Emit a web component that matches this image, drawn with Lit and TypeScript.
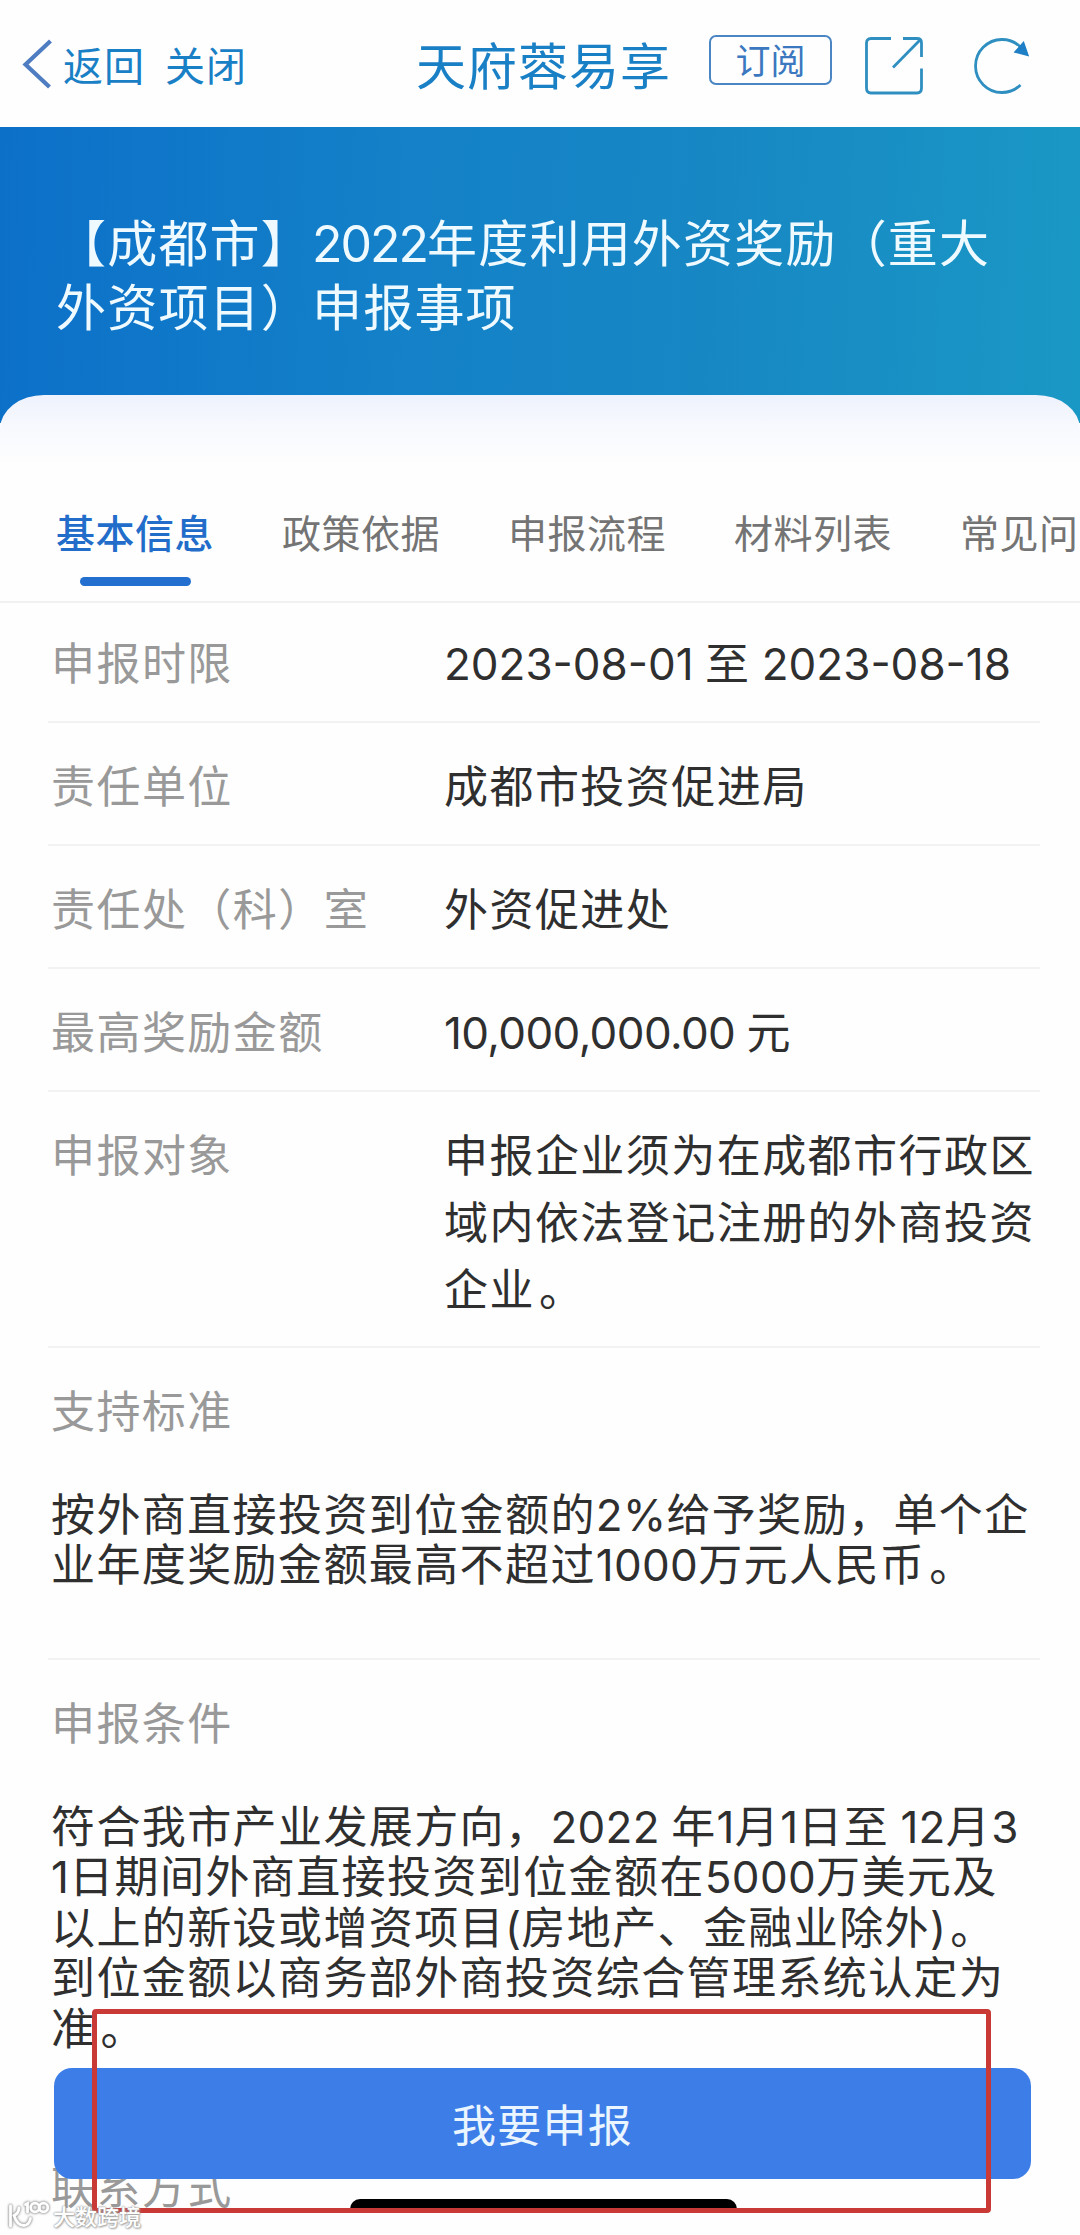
import { LitElement, html, css } from "lit";
import { customElement, property } from "lit/decorators.js";

/** Splits mixed text so that Latin digits and signs use the numeral face. */
const mixed = (text: string) =>
  text
    .split(/([0-9.,%()\-]+|。)/)
    .filter((part) => part !== "")
    .map((part) =>
      part === "。"
        ? html`<span class="stop">。</span>`
        : /^[0-9.,%()\-]+$/.test(part)
          ? html`<span class="num">${part}</span>`
          : part
    );

const numeral = css`
  .num {
    font-family: Inter, "Liberation Sans", sans-serif;
    line-height: 0;
    letter-spacing: var(--num-spacing, -0.1px);
  }
  .stop {
    margin-left: 4px;
    margin-right: -4px;
  }
`;

@customElement("nav-header")
class NavHeader extends LitElement {
  static styles = css`
    :host {
      display: flex;
      align-items: center;
      box-sizing: border-box;
      height: 127px;
      padding: 0 29px 0 22px;
      color: #1a80c6;
      background: #fefefe;
    }
    .chevron {
      width: 31px;
      height: 50px;
      margin-right: 10px;
    }
    .link {
      font-size: 40px;
      letter-spacing: 1px;
      line-height: 60px;
      width: 102px;
    }
    .title {
      margin-left: 149px;
      width: 258px;
      font-size: 50px;
      letter-spacing: 1px;
      line-height: 60px;
      margin-top: -2px;
    }
    .subscribe {
      box-sizing: border-box;
      width: 123px;
      height: 50px;
      margin: 0 32px 8px 35px;
      border: 2px solid #4a86c4;
      border-radius: 7px;
      font-size: 35px;
      line-height: 43px;
      text-align: center;
      color: #3b78bf;
    }
    .share {
      width: 60px;
      height: 60px;
      margin: 4px 50px 0 0;
      flex: none;
    }
    .reload {
      width: 58px;
      height: 60px;
      margin-top: 4px;
      flex: none;
    }
    .chevron,
    .subscribe,
    .link,
    .title {
      flex: none;
      white-space: nowrap;
    }
    svg {
      display: block;
      fill: none;
      stroke: #2f8fc0;
      stroke-width: 2.8;
    }
  `;

  render() {
    return html`
      <svg class="chevron" viewBox="0 0 31 50">
        <path d="M28.500 2 L3.500 25.500 L27.500 48" stroke="#4f7dc2" stroke-width="4.200" />
      </svg>
      <span class="link">返回</span>
      <span class="link">关闭</span>
      <span class="title">天府蓉易享</span>
      <span class="subscribe">订阅</span>
      <svg class="share" viewBox="0 0 60 60">
        <path d="M27 2.500 H7 Q2.500 2.500 2.500 7 V52 Q2.500 57 7 57 H53 Q57.500 57 57.500 52 V32.500" />
        <path d="M39 2.500 H53 Q57.500 2.500 57.500 7 V21" />
        <path d="M29 31.500 L56 4" />
      </svg>
      <svg class="reload" viewBox="0 0 58 60">
        <path d="M46.500 49 A26.500 26.500 0 1 1 46.500 11" />
        <path d="M41 16 L49.500 6.500 L54 19.500 Z" fill="#1f7fc6" stroke="#1f7fc6" stroke-width="1.500" />
      </svg>
    `;
  }
}

@customElement("tab-strip")
class TabStrip extends LitElement {
  @property({ attribute: false }) tabs: string[] = [];

  static styles = css`
    :host {
      display: block;
      overflow: hidden;
      border-bottom: 2px solid #f1f1f2;
    }
    .strip {
      display: flex;
      gap: 68px;
      padding: 106px 0 0 56px;
    }
    .tab {
      flex: none;
      width: 158px;
      height: 100px;
      font-size: 39px;
      letter-spacing: 0.5px;
      line-height: 60px;
      white-space: nowrap;
      color: #747474;
    }
    .tab:last-child {
      width: 124px;
    }
    .active {
      color: #226dca;
      font-weight: 500;
    }
    .active::after {
      content: "";
      display: block;
      width: 111px;
      height: 9px;
      margin: 16px 0 0 24px;
      border-radius: 5px;
      background: #226fd0;
    }
  `;

  render() {
    return html`<div class="strip">
      ${this.tabs.map((t, i) => html`<div class="tab ${i === 0 ? "active" : ""}">${t}</div>`)}
    </div>`;
  }
}

@customElement("info-row")
class InfoRow extends LitElement {
  @property() label = "";
  @property({ attribute: false }) lines: string[] = [];

  static styles = [
    numeral,
    css`
      :host {
        display: grid;
        grid-template-columns: 393px 1fr;
        box-sizing: border-box;
        margin: 0 40px 0 48px;
        padding: 28px 0 0 3px;
        border-bottom: 2px solid #f2f2f3;
        font-size: 44px;
        letter-spacing: 1.45px;
        line-height: 67px;
        white-space: nowrap;
      }
      .label {
        color: #999;
      }
      .value {
        color: #2f2f2f;
      }
    `,
  ];

  render() {
    return html`
      <div class="label">${this.label}</div>
      <div class="value">${this.lines.map((l) => html`<div>${mixed(l)}</div>`)}</div>
    `;
  }
}

@customElement("info-section")
class InfoSection extends LitElement {
  @property() label = "";
  @property({ attribute: false }) lines: string[] = [];

  static styles = [
    numeral,
    css`
      :host {
        display: block;
        box-sizing: border-box;
        margin: 0 40px 0 48px;
        padding: 28px 0 0 3px;
        border-bottom: 2px solid #f2f2f3;
        font-size: 44px;
        letter-spacing: 1.4px;
        white-space: nowrap;
        --num-spacing: 0.3px;
      }
      .label {
        line-height: 67px;
        color: #999;
      }
      .body {
        margin-top: 44px;
        line-height: 50.4px;
        color: #2f2f2f;
      }
    `,
  ];

  render() {
    return html`
      <div class="label">${this.label}</div>
      <div class="body">${this.lines.map((l) => html`<div>${mixed(l)}</div>`)}</div>
    `;
  }
}

@customElement("app-root")
class AppRoot extends LitElement {
  static styles = [
    numeral,
    css`
      :host {
        display: block;
        position: relative;
        width: 1080px;
        height: 2235px;
        overflow: hidden;
        background: #fefefe;
        font-family: "Noto Sans CJK SC", sans-serif;
      }
      .banner {
        box-sizing: border-box;
        height: 296px;
        padding: 81px 0 0 56px;
        background: linear-gradient(92deg, #0c70c9 0%, #1481c8 38%, #1787c4 65%, #1a98c5 100%);
        color: #eefaff;
        font-size: 50px;
        letter-spacing: 1.2px;
        line-height: 64px;
        white-space: nowrap;
        --num-spacing: -2px;
      }
      .card {
        margin: -28px 0 0;
        border-radius: 44px 44px 0 0 / 34px 34px 0 0;
        background: linear-gradient(#eef2fd 0, #f7f9fe 32px, #fefefe 70px);
      }
      .first {
        padding-top: 25px;
        height: 120px;
        --num-spacing: 0px;
      }
      .row {
        height: 123px;
      }
      .amount {
        --num-spacing: -0.6px;
      }
      .tall {
        height: 256px;
      }
      .standard {
        height: 312px;
      }
      .conditions {
        height: 464px;
        border-bottom-color: transparent;
      }
      .apply {
        position: absolute;
        left: 54px;
        top: 2068px;
        width: 977px;
        height: 111px;
        border: 0;
        border-radius: 18px;
        background: #3c7de7;
        color: #eaf5ff;
        font-family: inherit;
        font-size: 44px;
        letter-spacing: 1.3px;
        line-height: 109px;
        padding: 0;
      }
      .home {
        position: absolute;
        left: 350px;
        top: 2199px;
        width: 387px;
        height: 12px;
        border-radius: 10px 10px 0 0;
        background: #000;
      }
      .frame {
        position: absolute;
        box-sizing: border-box;
        left: 92px;
        top: 2009px;
        width: 899px;
        height: 204px;
        border: 5px solid #c93a36;
        border-radius: 4px;
      }
      .mark {
        position: absolute;
        left: 8px;
        top: 2198px;
        display: flex;
        align-items: center;
        gap: 4px;
        height: 34px;
        color: #fff;
        font-size: 22px;
        font-weight: 500;
        line-height: 34px;
        white-space: nowrap;
        text-shadow: 0 0 2px #999, 0 0 2px #aaa, 1px 1px 2px #aaa;
      }
      .logo {
        width: 41px;
        height: 30px;
        fill: none;
        stroke: #fff;
        stroke-width: 2.8;
        stroke-linecap: round;
        filter: drop-shadow(0 0 1px #999) drop-shadow(0 0 1px #aaa);
      }
    `,
  ];

  render() {
    return html`
      <nav-header></nav-header>
      <div class="banner">
        <div>${mixed("【成都市】2022年度利用外资奖励（重大")}</div>
        <div>外资项目）申报事项</div>
      </div>
      <div class="card">
        <tab-strip .tabs=${["基本信息", "政策依据", "申报流程", "材料列表", "常见问"]}></tab-strip>
        <info-row class="first" label="申报时限" .lines=${["2023-08-01 至 2023-08-18"]}></info-row>
        <info-row class="row" label="责任单位" .lines=${["成都市投资促进局"]}></info-row>
        <info-row class="row" label="责任处（科）室" .lines=${["外资促进处"]}></info-row>
        <info-row class="row amount" label="最高奖励金额" .lines=${["10,000,000.00 元"]}></info-row>
        <info-row
          class="tall"
          label="申报对象"
          .lines=${["申报企业须为在成都市行政区", "域内依法登记注册的外商投资", "企业。"]}
        ></info-row>
        <info-section
          class="standard"
          label="支持标准"
          .lines=${["按外商直接投资到位金额的2%给予奖励，单个企", "业年度奖励金额最高不超过1000万元人民币。"]}
        ></info-section>
        <info-section
          class="conditions"
          label="申报条件"
          .lines=${[
            "符合我市产业发展方向，2022 年1月1日至 12月3",
            "1日期间外商直接投资到位金额在5000万美元及",
            "以上的新设或增资项目(房地产、金融业除外)。",
            "到位金额以商务部外商投资综合管理系统认定为",
            "准。",
          ]}
        ></info-section>
        <info-section label="联系方式"></info-section>
      </div>
      <button class="apply">我要申报</button>
      <div class="home"></div>
      <div class="frame"></div>
      <div class="mark">
        <svg class="logo" viewBox="0 0 41 30">
          <path d="M2.500 6 V26" />
          <path d="M11 8 Q10.500 13.500 6 15.500 Q9 25.500 16 25.500 Q21 25 22.500 18.500" />
          <path d="M17.500 4.500 L19.500 3.500 V12" />
          <circle cx="27" cy="7.500" r="4.300" />
          <circle cx="35.500" cy="7.500" r="4.300" />
        </svg>
        <span>大数跨境</span>
      </div>
    `;
  }
}
